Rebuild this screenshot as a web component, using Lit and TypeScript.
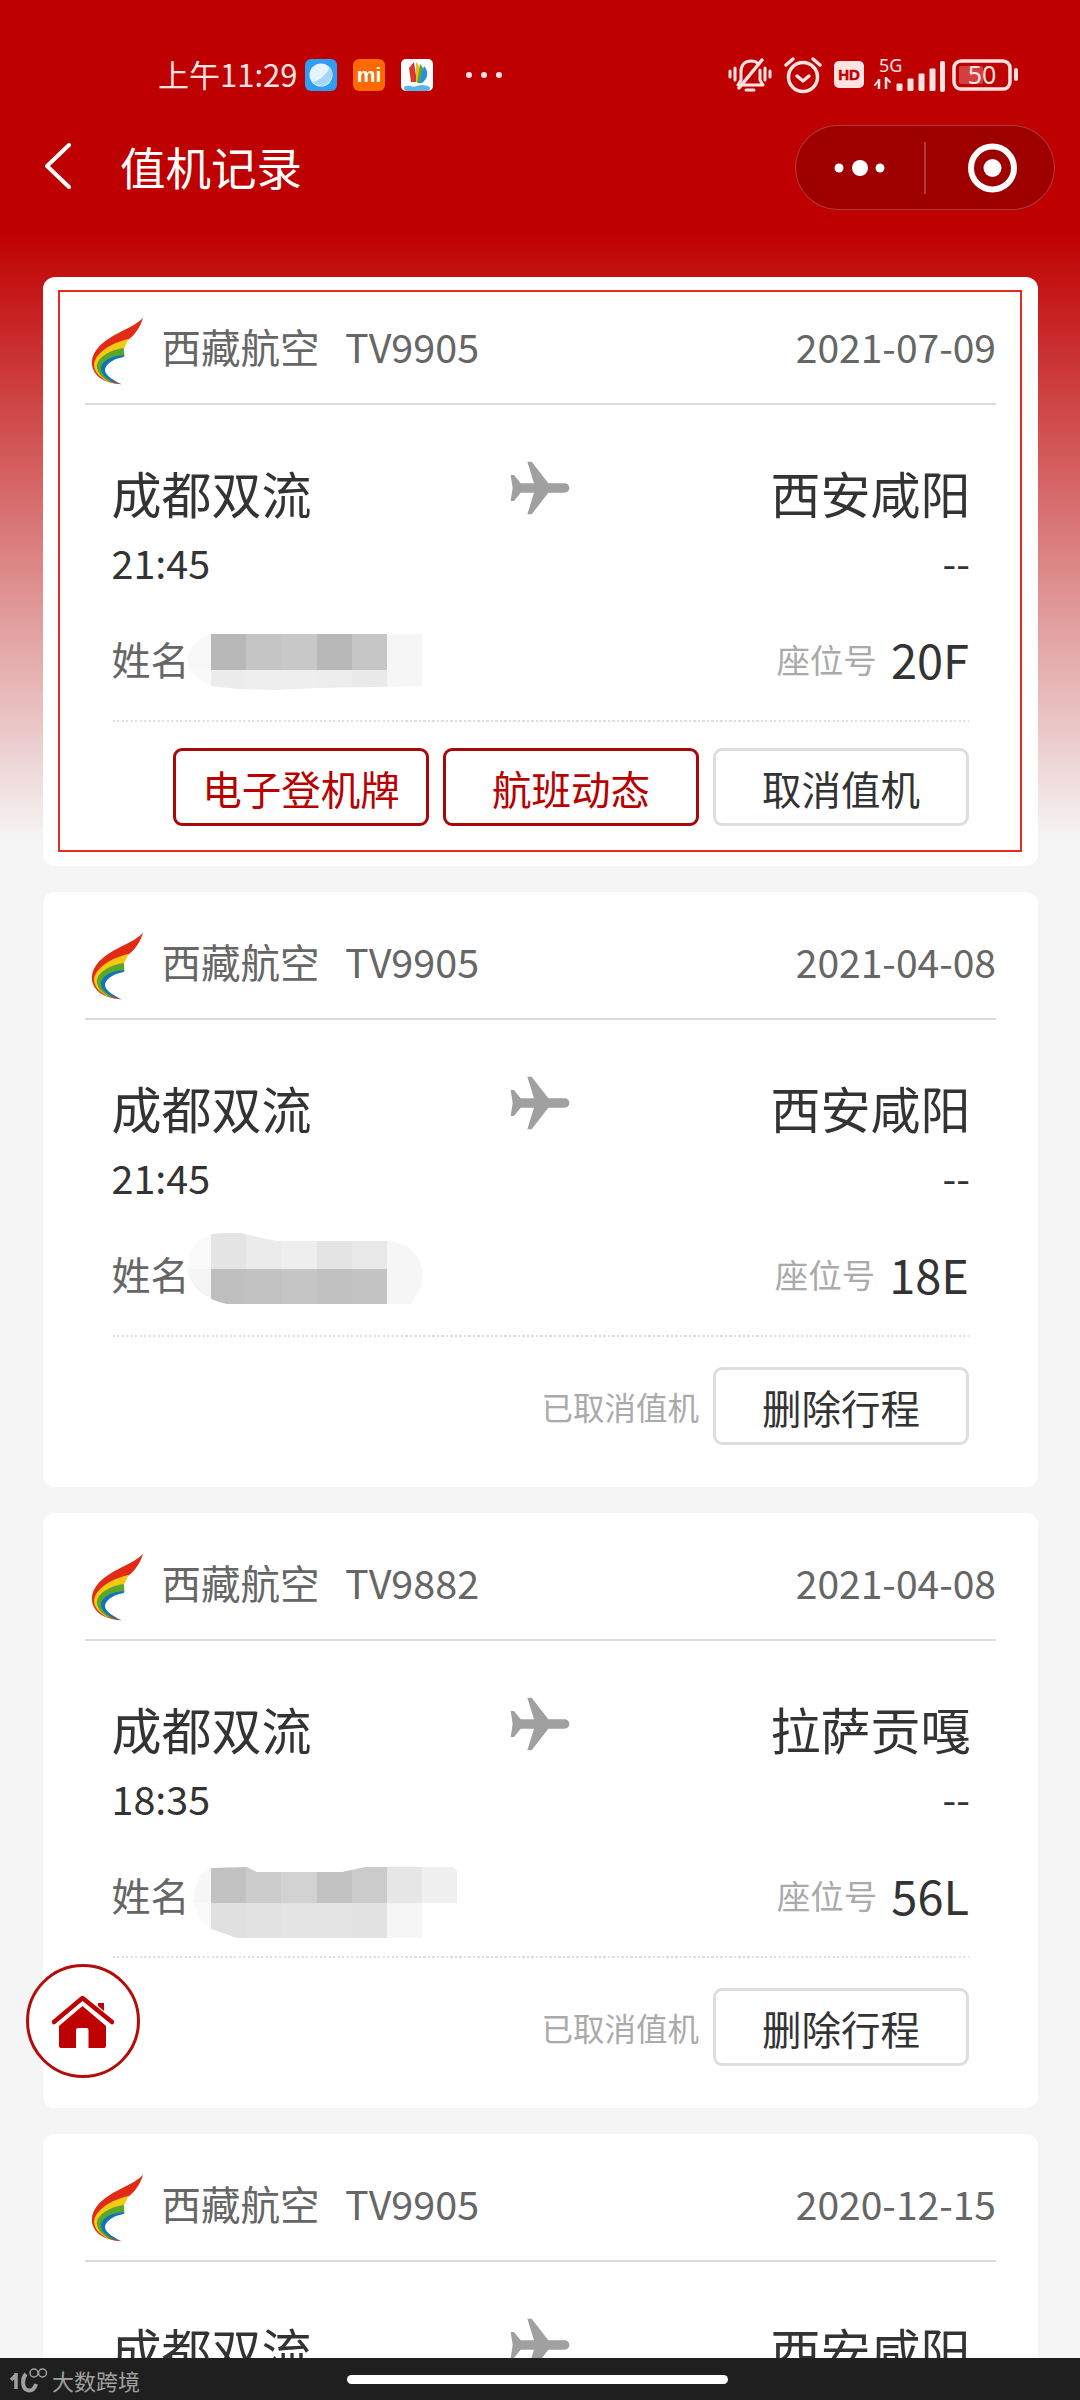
import { LitElement, html, css, nothing } from 'lit';
import { customElement } from 'lit/decorators.js';

type Mosaic = { top: number; clip: string; rows: string[][] };
type Flight = {
  no: string;
  date: string;
  to: string;
  time: string;
  seat: string;
  selected?: boolean;
  cancelled?: boolean;
  mosaic?: Mosaic;
};

const flights: Flight[] = [
  {
    no: 'TV9905', date: '2021-07-09', to: '西安咸阳', time: '21:45', seat: '20F', selected: true,
    mosaic: {
      top: 9,
      clip: 'polygon(6px 12px, 14px 4px, 24px 0, 236px 0, 236px 52px, 130px 54px, 90px 56px, 50px 55px, 24px 52px, 10px 44px, 2px 34px, 0 24px)',
      rows: [
        ['#f8f8f8', '#b8b8b8', '#c5c5c5', '#c8c8c8', '#b8b8b8', '#c6c6c6', '#f6f6f6'],
        ['#f9f9f9', '#ececec', '#eeeeee', '#eeeeee', '#ededed', '#e9e9e9', '#f6f6f6'],
      ],
    },
  },
  {
    no: 'TV9905', date: '2021-04-08', to: '西安咸阳', time: '21:45', seat: '18E', cancelled: true,
    mosaic: {
      top: -7,
      clip: 'polygon(0 34px, 3px 20px, 12px 7px, 24px 1px, 38px 0, 54px 0, 70px 4px, 90px 8px, 205px 8px, 222px 14px, 232px 26px, 236px 38px, 236px 52px, 228px 63px, 224px 71px, 40px 71px, 32px 69px, 24px 66px, 10px 57px, 2px 44px)',
      rows: [
        ['#fafafa', '#e5e5e5', '#ebebeb', '#eeeeee', '#e4e4e4', '#e8e8e8', '#f6f6f6'],
        ['#f5f5f5', '#bfbfbf', '#c2c2c2', '#c5c5c5', '#c0c0c0', '#c4c4c4', '#f6f6f6'],
      ],
    },
  },
  {
    no: 'TV9882', date: '2021-04-08', to: '拉萨贡嘎', time: '18:35', seat: '56L', cancelled: true,
    mosaic: {
      top: 6,
      clip: 'polygon(6px 36px, 8px 20px, 14px 8px, 24px 1px, 60px 0, 70px 5px, 155px 5px, 178px 0, 266px 0, 271px 5px, 271px 36px, 236px 36px, 236px 71px, 50px 71px, 24px 62px, 14px 54px)',
      rows: [
        ['#f7f7f7', '#c2c2c2', '#cccccc', '#d2d2d2', '#c2c2c2', '#cbcbcb', '#e6e6e6', '#f0f0f0'],
        ['#fafafa', '#e0e0e0', '#e2e2e2', '#e4e4e4', '#e4e4e4', '#e2e2e2', '#f6f6f6', '#ffffff'],
      ],
    },
  },
  { no: 'TV9905', date: '2020-12-15', to: '西安咸阳', time: '21:45', seat: '20F', cancelled: true },
];

const logo = html`<svg class="logo" viewBox="90 50 160 210">
  <path fill="#e22b14" d="M247 57C222 88 160 100 118 142C90 172 88 205 112 230C128 246 155 254 183 255C150 245 115 225 108 195L205 122C225 105 240 85 247 57Z"/>
  <path fill="#f6c913" d="M205 120C165 130 120 150 104 185C95 210 115 235 150 250C125 235 120 210 130 195L190 150Z"/>
  <path fill="#5aa72e" d="M190 147C150 155 115 172 110 200C110 225 135 245 165 253C140 240 125 220 135 200C145 182 170 172 192 170Z"/>
  <path fill="#1274b8" d="M192 168C160 170 130 180 122 205C120 228 150 248 183 255C155 240 130 225 135 208C142 190 165 178 190 174Z"/>
</svg>`;

const plane = html`<svg class="plane" viewBox="60 60 180 162">
  <path fill="#a0a0a0" d="M112 62H125L175 127H222C232 127 238 133 238 141C238 149 232 155 222 155H175L125 220H112L132 155H92L72 180H62L68 141L62 102H72L92 127H132Z"/>
</svg>`;

@customElement('flight-card')
export class FlightCard extends LitElement {
  static properties = { flight: { attribute: false } };
  flight!: Flight;

  static styles = css`
    :host {
      display: block;
      font-family: 'Noto Sans CJK SC', 'Noto Sans', sans-serif;
    }
    .card {
      position: relative;
      background: #fff;
      border-radius: 12px;
      padding-bottom: 42px;
    }
    .card.selected {
      padding-bottom: 40px;
    }
    .card.selected::after {
      content: '';
      position: absolute;
      top: 13px;
      left: 15px;
      right: 16px;
      bottom: 14px;
      border: 2.5px solid #e42b22;
      pointer-events: none;
    }
    .head {
      height: 108px;
      padding: 18px 42px 0 47px;
      display: flex;
      align-items: center;
      font-size: 39.5px;
      color: #666;
    }
    .head span {
      padding-bottom: 7px;
    }
    .logo {
      width: 54px;
      height: 71px;
      margin: 2px 17.5px 0 0;
      flex: none;
    }
    .no {
      margin-left: 25.5px;
    }
    .head .date {
      margin-left: auto;
      font-size: 39px;
    }
    .rule {
      height: 2px;
      margin: 0 42px;
      background: #dcdcdc;
    }
    .body {
      padding: 0 69px 0 70px;
    }
    .row {
      display: flex;
      justify-content: space-between;
    }
    .cities {
      margin: 52px -1.5px 0;
      font-size: 50px;
      line-height: 70px;
      color: #333;
    }
    .plane {
      width: 60px;
      height: 54px;
      margin: 4px 3px 0 0;
    }
    .times {
      margin: 9.5px -1px 0 -1.5px;
      font-size: 39.5px;
      line-height: 50px;
      color: #333;
    }
    .person {
      margin-top: 38.5px;
      height: 70px;
      justify-content: flex-start;
      align-items: flex-start;
    }
    .label {
      margin-left: -1.5px;
      font-size: 39px;
      line-height: 67px;
      color: #666;
    }
    .mosaic {
      display: grid;
      grid-auto-rows: 35.5px;
      margin-left: -2.5px;
    }
    .mosaic i {
      display: block;
    }
    .seat {
      margin-left: auto;
      display: flex;
      align-items: center;
      height: 66px;
      gap: 14px;
      font-size: 47px;
      color: #333;
    }
    .seat span {
      font-size: 33.5px;
      color: #aaa;
    }
    .dots {
      margin-top: 25px;
      height: 2px;
      background: repeating-linear-gradient(90deg, #dedede 0 2px, transparent 2px 4.5px);
    }
    .actions {
      margin-top: 30px;
      display: flex;
      justify-content: flex-end;
      align-items: center;
      gap: 14px;
    }
    .selected .actions {
      margin-top: 26px;
    }
    .status {
      font-size: 31.5px;
      color: #aaa;
    }
    .btn {
      box-sizing: border-box;
      width: 256px;
      height: 78px;
      display: flex;
      align-items: center;
      justify-content: center;
      border: 3px solid #dedede;
      border-radius: 9px;
      font-size: 39.5px;
      color: #333;
    }
    .btn.red {
      border: 3.5px solid #a80808;
      color: #b80000;
    }
  `;

  mosaic(m?: Mosaic) {
    if (!m) return nothing;
    const cols = m.rows[0].length;
    return html`<div
      class="mosaic"
      style="margin-top:${m.top}px;clip-path:${m.clip};grid-template-columns:24px repeat(${cols - 1},35.2px)"
    >
      ${m.rows.flat().map((c) => html`<i style="background:${c}"></i>`)}
    </div>`;
  }

  render() {
    const f = this.flight;
    return html`<div class="card ${f.selected ? 'selected' : ''}">
      <div class="head">
        ${logo}<span>西藏航空</span><span class="no">${f.no}</span><span class="date">${f.date}</span>
      </div>
      <div class="rule"></div>
      <div class="body">
        <div class="row cities"><span>成都双流</span>${plane}<span>${f.to}</span></div>
        <div class="row times"><span>${f.time}</span><span>--</span></div>
        <div class="row person">
          <span class="label">姓名</span>
          ${this.mosaic(f.mosaic)}
          <div class="seat"><span>座位号</span>${f.seat}</div>
        </div>
        <div class="dots"></div>
        <div class="actions">
          ${f.cancelled
            ? html`<span class="status">已取消值机</span>
                <div class="btn">删除行程</div>`
            : html`<div class="btn red">电子登机牌</div>
                <div class="btn red">航班动态</div>
                <div class="btn">取消值机</div>`}
        </div>
      </div>
    </div>`;
  }
}

const ic = '#ffe3e3';

@customElement('app-root')
export class AppRoot extends LitElement {
  static styles = css`
    :host {
      display: block;
      position: relative;
      width: 1080px;
      height: 2400px;
      overflow: hidden;
      background: linear-gradient(#bf0000 232px, #f5f5f5 840px);
      font-family: 'Noto Sans CJK SC', 'Noto Sans', sans-serif;
    }
    .statusbar {
      height: 50px;
      padding: 50px 62px 25px 158px;
      display: flex;
      align-items: center;
      color: #ffe3e3;
    }
    .clock {
      font-size: 31px;
      width: 147px;
      padding-bottom: 3px;
      white-space: nowrap;
    }
    .app {
      width: 32px;
      height: 32px;
      margin-right: 16px;
      flex: none;
    }
    .more {
      margin-left: 17px;
      display: flex;
      gap: 9px;
    }
    .more i {
      width: 6px;
      height: 6px;
      border-radius: 50%;
      background: #ffe3e3;
    }
    .sys {
      margin-left: auto;
      display: block;
      width: 290px;
      height: 40px;
    }
    .nav {
      height: 85px;
      padding: 0 25px 22px 45px;
      display: flex;
      align-items: center;
    }
    .back {
      width: 26px;
      height: 46px;
      margin: 0 49px 3px 0;
    }
    .title {
      padding-bottom: 3px;
      font-size: 45.5px;
      color: #fff;
    }
    .capsule {
      box-sizing: border-box;
      margin-left: auto;
      width: 260px;
      height: 85px;
      display: flex;
      align-items: center;
      border: 1.5px solid rgba(255, 255, 255, 0.22);
      border-radius: 43px;
      background: #9e0000;
    }
    .capsule svg {
      width: 260px;
      height: 85px;
      margin: -1.5px;
      flex: none;
    }
    .list {
      margin-top: 45px;
      padding: 0 42px 0 43px;
      display: flex;
      flex-direction: column;
      gap: 26px;
    }
    .home {
      box-sizing: border-box;
      position: absolute;
      left: 26px;
      top: 1964px;
      width: 114px;
      height: 114px;
      display: flex;
      align-items: center;
      justify-content: center;
      background: #fff;
      border: 3px solid #b40b0b;
      border-radius: 50%;
    }
    .home svg {
      width: 62px;
      height: 54px;
      margin-top: 4px;
    }
    .navbar {
      position: absolute;
      left: 0;
      right: 0;
      bottom: 0;
      height: 42px;
      background: #1f1f1f;
    }
    .pill {
      position: absolute;
      left: 347px;
      top: 17px;
      width: 381px;
      height: 9px;
      border-radius: 5px;
      background: #fff;
    }
    .mark {
      position: absolute;
      left: 10px;
      top: 7px;
      display: flex;
      align-items: center;
      gap: 4px;
      font-size: 22px;
      line-height: 30px;
      color: #a0a0a0;
    }
    .mark svg {
      width: 38px;
      height: 26px;
    }
  `;

  sysIcons() {
    // bell, alarm, hd, 5g + signal, battery: x origin at 728, y origin at 55
    return html`<svg class="sys" viewBox="0 0 290 40" fill="none" stroke=${ic} stroke-width="3" stroke-linecap="round" stroke-linejoin="round">
      <g>
        <path d="M7 13v12M2 16v6M37 13v12M42 16v6" />
        <path d="M10 30l3-5V16c0-6 4-10 10-10 3 0 6 1 7 3M32 15v10l3 5H14" />
        <path d="M11 33L34 5" stroke-width="3.5" />
        <path d="M18 35h8" />
      </g>
      <g transform="translate(57 2)">
        <circle cx="18" cy="20" r="14.5" stroke-width="3.5" />
        <path d="M12 19l6 5 6-5" stroke-width="3.5" />
        <path d="M1 8l7-6M35 8l-7-6" stroke-width="3.5" />
      </g>
      <rect x="106" y="6" width="30" height="27" rx="5" fill=${ic} stroke="none" />
      <text x="121" y="25" text-anchor="middle" fill="#bf0000" stroke="#bf0000" stroke-width=".5" font-size="15" font-weight="700" font-family="Liberation Sans, sans-serif">HD</text>
      <text x="151" y="17" fill=${ic} stroke="none" font-size="18" font-family="Noto Sans, sans-serif">5G</text>
      <path d="M151 24v10M158 22v12" stroke-width="2.5" stroke-linecap="butt" />
      <path d="M147 30l4-5M162 27l-4-4" stroke-width="2" />
      <path d="M169 35v-6h5v6zM180 35v-11h5v11zM191 35v-16h5v16zM202 35v-21h5v21z" fill=${ic} stroke-width="1" />
      <path d="M214 35V8h1v27z" fill=${ic} stroke-width="4" />
      <rect x="226" y="6" width="56" height="28" rx="7" stroke-width="3.5" />
      <rect x="231" y="11" width="24" height="18" rx="2" fill=${ic} fill-opacity=".28" stroke="none" />
      <path d="M288 15v9" stroke-width="4" />
      <text x="254" y="29" text-anchor="middle" fill=${ic} stroke="none" font-size="25" font-family="Noto Sans, sans-serif">50</text>
    </svg>`;
  }

  render() {
    return html`
      <div class="statusbar">
        <span class="clock">上午11:29</span>
        <svg class="app" viewBox="0 0 32 32">
          <rect width="32" height="32" rx="6" fill="#2f9ef4" />
          <circle cx="16" cy="16" r="11.5" fill="#e6f4ff" />
          <path d="M8 23C14 22 22 15 25 8C29 14 27 23 20 26C16 28 11 26 8 23Z" fill="#a5d6fa" />
        </svg>
        <svg class="app" viewBox="0 0 32 32">
          <rect width="32" height="32" rx="6" fill="#ff6a00" />
          <text x="16" y="23" text-anchor="middle" fill="#fff" font-size="21" font-weight="700" font-family="Liberation Sans, sans-serif">mi</text>
        </svg>
        <svg class="app" viewBox="0 0 32 32">
          <rect width="32" height="32" rx="5" fill="#fff" />
          <path d="M13 3L8 9l2 14h6z" fill="#d9382c" />
          <path d="M15 3c4 3 5 11 2 20h-2z" fill="#f4b81c" />
          <path d="M19 5c5 4 5 13 0 19h-3z" fill="#4fae3d" />
          <path d="M23 7c5 5 4 13-2 17h-3z" fill="#2c8fd8" />
          <path d="M3 28c5-3 9 1 13-1s9-1 13 1v1a3 3 0 0 1-3 3H6a3 3 0 0 1-3-3z" fill="#5db4e6" />
        </svg>
        <div class="more"><i></i><i></i><i></i></div>
        ${this.sysIcons()}
      </div>
      <div class="nav">
        <svg class="back" viewBox="0 0 26 46" fill="none" stroke="#fff" stroke-width="4" stroke-linecap="round" stroke-linejoin="round">
          <path d="M24 2L2 23l22 21" />
        </svg>
        <span class="title">值机记录</span>
        <div class="capsule">
          <svg viewBox="0 0 260 85">
            <circle cx="44" cy="43" r="4.5" fill="#fff" />
            <circle cx="65" cy="43" r="8" fill="#fff" />
            <circle cx="85" cy="43" r="4.5" fill="#fff" />
            <path d="M130 17v52" stroke="#fff" stroke-opacity=".3" stroke-width="1.5" />
            <circle cx="197.500" cy="43" r="21.500" fill="none" stroke="#fff" stroke-width="6" />
            <circle cx="197.500" cy="43" r="9" fill="#fff" />
          </svg>
        </div>
      </div>
      <div class="list">
        ${flights.map((f) => html`<flight-card .flight=${f}></flight-card>`)}
      </div>
      <div class="home">
        <svg viewBox="0 0 62 54">
          <path d="M2 26L30.500 2L60 26" fill="none" stroke="#bf0000" stroke-width="4.500" stroke-linecap="round" stroke-linejoin="round" />
          <path d="M46 7h6v8l-6-5z" fill="#bf0000" />
          <path d="M30.500 10L54 30V50a2 2 0 0 1-2 2H36.500V34a2 2 0 0 0-2-2H26a2 2 0 0 0-2 2V52H9a2 2 0 0 1-2-2V30Z" fill="#bf0000" />
        </svg>
      </div>
      <div class="navbar">
        <div class="mark">
          <svg viewBox="0 0 38 26" fill="none" stroke="#a0a0a0" stroke-width="3">
            <path d="M6 8L1 13M6 6v16" stroke-width="3.500" />
            <path d="M16 7c-4 4-4 14 1 16s8-2 9-6" stroke-width="4" />
            <circle cx="24" cy="6" r="4" stroke-width="1.500" />
            <circle cx="32.500" cy="6" r="4" stroke-width="1.500" />
          </svg>
          <span>大数跨境</span>
        </div>
        <div class="pill"></div>
      </div>
    `;
  }
}
